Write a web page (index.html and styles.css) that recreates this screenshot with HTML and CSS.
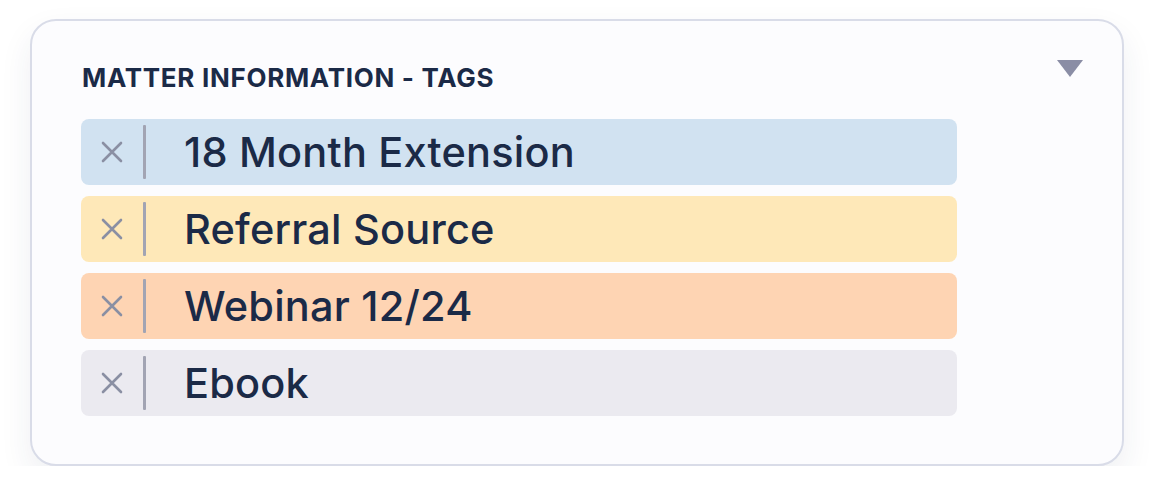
FILE: index.html
```html
<!DOCTYPE html>
<html>
<head>
<meta charset="utf-8">
<link rel="stylesheet" href="styles.css">
</head>
<body>
<div class="card">
  <div class="header">
    <h2 class="title">MATTER INFORMATION - TAGS</h2>
    <svg class="caret" width="26" height="17" viewBox="0 0 26 17"><path d="M0 0 H26 L13 17 Z" fill="#8a8da5"/></svg>
  </div>
  <ul class="tags">
    <li class="tag tag-blue"><span class="remove"><svg width="22" height="22" viewBox="0 0 22 22"><path d="M2 2 L20 20 M20 2 L2 20" stroke="#8a8fa3" stroke-width="2.6" stroke-linecap="round"/></svg></span><span class="divider"></span><span class="label">18 Month Extension</span></li>
    <li class="tag tag-yellow"><span class="remove"><svg width="22" height="22" viewBox="0 0 22 22"><path d="M2 2 L20 20 M20 2 L2 20" stroke="#8a8fa3" stroke-width="2.6" stroke-linecap="round"/></svg></span><span class="divider"></span><span class="label">Referral Source</span></li>
    <li class="tag tag-orange"><span class="remove"><svg width="22" height="22" viewBox="0 0 22 22"><path d="M2 2 L20 20 M20 2 L2 20" stroke="#8a8fa3" stroke-width="2.6" stroke-linecap="round"/></svg></span><span class="divider"></span><span class="label">Webinar 12/24</span></li>
    <li class="tag tag-grey"><span class="remove"><svg width="22" height="22" viewBox="0 0 22 22"><path d="M2 2 L20 20 M20 2 L2 20" stroke="#8a8fa3" stroke-width="2.6" stroke-linecap="round"/></svg></span><span class="divider"></span><span class="label">Ebook</span></li>
  </ul>
</div>
</body>
</html>
```
FILE: styles.css
```css
html, body {
  margin: 0;
  padding: 0;
  background: #ffffff;
}
body {
  font-family: Inter, "Noto Sans", sans-serif;
  color: #1b2a47;
}
.card {
  box-sizing: border-box;
  margin: 19px 0 0 30px;
  width: 1094px;
  height: 447px;
  border: 2px solid #d9dce8;
  border-radius: 26px;
  background: #fcfcfe;
  box-shadow: 0 14px 32px rgba(40, 50, 90, 0.08);
  padding: 0 0 0 49px;
}
.header {
  display: flex;
  justify-content: space-between;
  align-items: flex-start;
  height: 98px;
}
.title {
  margin: 42px 0 0 1px;
  font-size: 26px;
  font-weight: 700;
  letter-spacing: 0.7px;
  line-height: 30px;
  color: #1b2a47;
}
.caret {
  margin: 39px 39px 0 0;
}
.tags {
  list-style: none;
  margin: 0;
  padding: 0;
  width: 876px;
  display: flex;
  flex-direction: column;
  gap: 11px;
}
.tag {
  height: 66px;
  border-radius: 8px;
  display: flex;
  align-items: center;
}
.tag-blue { background: #d1e2f1; }
.tag-yellow { background: #fee8b8; }
.tag-orange { background: #fed4b3; }
.tag-grey { background: #ebeaf0; }
.remove {
  width: 62px;
  display: flex;
  justify-content: center;
  align-items: center;
}
.divider {
  width: 3px;
  height: 54px;
  background: #a2a4b3;
  border-radius: 1px;
}
.label {
  margin-left: 38px;
  font-size: 41.5px;
  font-weight: 500;
  color: #1b2a47;
  letter-spacing: 0.2px;
}
```
